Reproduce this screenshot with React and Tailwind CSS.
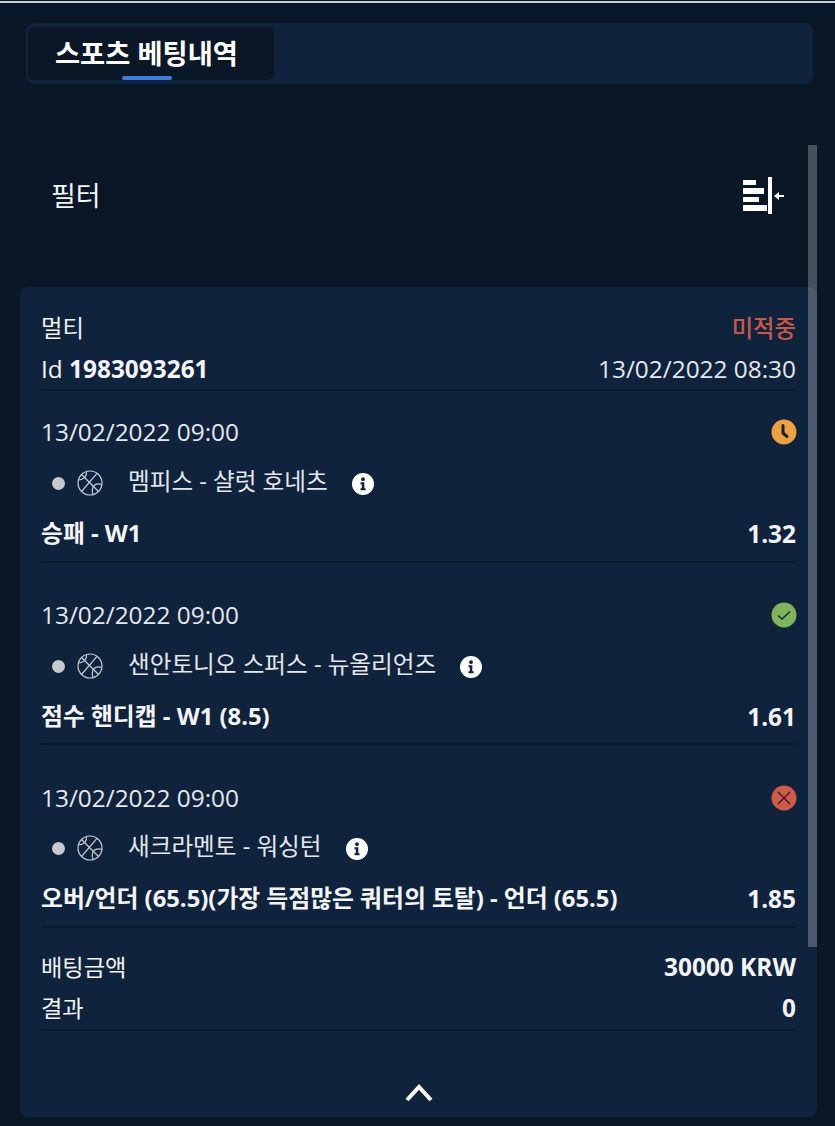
import React from 'react';

const bets = [
    { event: '멤피스 - 샬럿 호네츠', market: '승패 - W1', odds: '1.32', status: 'pending', rowClass: 'h-[172px]', dateClass: 'pt-[24px]' },
    { event: '샌안토니오 스퍼스 - 뉴올리언즈', market: '점수 핸디캡 - W1 (8.5)', odds: '1.61', status: 'won', rowClass: 'h-[171px] mt-[11px]', dateClass: 'pt-[24px]' },
    { event: '새크라멘토 - 워싱턴', market: '오버/언더 (65.5)(가장 득점많은 쿼터의 토탈) - 언더 (65.5)', odds: '1.85', status: 'lost', rowClass: 'h-[172px] mt-[11px]', dateClass: 'pt-[26px]' },
];

const StatusIcon = ({ status }) => {
    if (status === 'pending') {
        return (
            <svg width="26" height="26" viewBox="0 0 26 26" className="-mr-[1px]">
                <circle cx="13" cy="13" r="12.500" fill="#f0a03c" />
                <path d="M12 6.500v7.500l4 3.500" fill="none" stroke="#10233c" strokeWidth="3" strokeLinecap="round" strokeLinejoin="round" />
            </svg>
        );
    }
    if (status === 'won') {
        return (
            <svg width="26" height="26" viewBox="0 0 26 26" className="-mr-[1px]">
                <circle cx="13" cy="13" r="12.500" fill="#7fb45a" />
                <path d="M7 13.500l4 3.500 8-7.500" fill="none" stroke="#14283a" strokeWidth="1.500" />
            </svg>
        );
    }
    return (
        <svg width="26" height="26" viewBox="0 0 26 26" className="-mr-[1px]">
            <circle cx="13" cy="13" r="12.500" fill="#cf5a47" />
            <path d="M7 7l12 12M19 7L7 19" fill="none" stroke="#3a1f2c" strokeWidth="1.500" />
        </svg>
    );
};

const BallIcon = () => (
    <svg width="26" height="26" viewBox="0 0 26 26" fill="none" stroke="#c3ccd6" strokeWidth="1.200">
        <circle cx="13" cy="13" r="12" />
        <path d="M4.500 4.500l17 17" />
        <path d="M9.500 1.500c.5 4-2 8-8.300 8.500" />
        <path d="M20 3.300L4.500 21.500" />
        <path d="M16.500 16c2-2 5-2.500 8.300-1.500" />
        <path d="M16.500 16c-1.500 2.500-1.500 5.500-.5 8.500" />
    </svg>
);

const InfoIcon = () => (
    <svg width="22" height="22" viewBox="0 0 22 22">
        <circle cx="11" cy="11" r="11" fill="#ffffff" />
        <circle cx="11" cy="6.200" r="1.900" fill="#10233c" />
        <path d="M8.500 9.300h3.800v6h1.300v1.900H8.500v-1.900h1.300v-4.100H8.500z" fill="#10233c" />
    </svg>
);

const FilterIcon = () => (
    <svg width="42" height="38" viewBox="0 0 42 38" fill="#ffffff">
        <rect x="0" y="3" width="13" height="5" />
        <rect x="0" y="11" width="21" height="6" />
        <rect x="0" y="20" width="16" height="5" />
        <rect x="0" y="28" width="24" height="6" />
        <rect x="25" y="0" width="4" height="37" />
        <path d="M31 19l5-4v3h5v2h-5v3z" />
    </svg>
);

const BetRow = ({ bet }) => (
    <div className={`border-b-2 border-[#0b1a2e] ${bet.rowClass}`}>
        <div className={`flex items-center justify-between h-[58px] ${bet.dateClass}`}>
            <span className="text-[24.4px] text-[#e4e8ec]">13/02/2022 09:00</span>
            <StatusIcon status={bet.status} />
        </div>
        <div className="flex items-center h-[34px] mt-[17px] pl-[11px]">
            <span className="w-[13px] h-[13px] rounded-full bg-[#c6c9ce] mr-[12px]" />
            <BallIcon />
            <span className="ml-[25px] mb-[3px] text-[23.6px] text-[#e4e8ec]">{bet.event}</span>
            <span className="ml-[24px] mt-[2px] flex"><InfoIcon /></span>
        </div>
        <div className="flex items-center justify-between h-[34px] mt-[17px]">
            <span className="text-[23.8px] font-bold text-[#f2f4f6]">{bet.market}</span>
            <span className="text-[24.4px] font-bold text-[#f2f4f6]">{bet.odds}</span>
        </div>
    </div>
);

export default function App() {
    return (
        <div
            className="relative w-[835px] h-[1126px] overflow-hidden bg-[#0a1726] pt-[3px]"
            style={{ fontFamily: '"Open Sans", "Noto Sans CJK KR", sans-serif' }}
        >
            {/* Top hairline */}
            <div className="absolute top-[1px] left-0 right-0 h-[2px] bg-[#c9ced6]" />

            {/* Tabs */}
            <div className="mx-[26px] mt-[20px] h-[61px] w-[787px] rounded-[8px] bg-[#10233c] pl-[2px] pt-[4px]">
                <div className="relative w-[246px] h-[53px] rounded-[6px] bg-[#0a1726] flex items-center pl-[27px]">
                    <span className="text-[27.3px] font-semibold text-white mt-[2px]">스포츠 베팅내역</span>
                    <span className="absolute left-[94px] bottom-0 w-[50px] h-[4px] rounded-[2px] bg-[#3b7ddd]" />
                </div>
            </div>

            {/* Filter */}
            <div className="flex items-center justify-between h-[203px] pl-[51px] pr-[50px] pt-[21px]">
                <span className="text-[27px] text-[#f2f4f6]">필터</span>
                <FilterIcon />
            </div>

            {/* Bet card */}
            <div className="mx-[20px] w-[797px] h-[830px] rounded-[8px] bg-[#10233c] px-[21px] pt-[21px]">
                <div className="border-b-2 border-[#0b1a2e] h-[83px]">
                    <div className="flex items-center justify-between h-[41px]">
                        <span className="text-[23.3px] text-[#f2f4f6]">멀티</span>
                        <span className="text-[23.3px] font-medium text-[#c8584a]">미적중</span>
                    </div>
                    <div className="flex items-center justify-between h-[40px]">
                        <span className="text-[24.4px] text-[#f2f4f6]">Id <b>1983093261</b></span>
                        <span className="text-[24.4px] text-[#e4e8ec]">13/02/2022 08:30</span>
                    </div>
                </div>

                {bets.map((bet) => (
                    <BetRow key={bet.event} bet={bet} />
                ))}

                <div className="border-b-2 border-[#0b1a2e] h-[103px] pt-[19px]">
                    <div className="flex items-center justify-between h-[41px]">
                        <span className="text-[23.2px] text-[#f2f4f6]">배팅금액</span>
                        <span className="text-[24.4px] font-bold text-[#f2f4f6]">30000 KRW</span>
                    </div>
                    <div className="flex items-center justify-between h-[41px]">
                        <span className="text-[23.2px] text-[#f2f4f6]">결과</span>
                        <span className="text-[24.4px] font-bold text-[#f2f4f6]">0</span>
                    </div>
                </div>

                <div className="flex justify-center mt-[53px]">
                    <svg width="28" height="18" viewBox="0 0 28 18" fill="none" stroke="#ffffff" strokeWidth="4">
                        <path d="M2 16L14 3l12 13" />
                    </svg>
                </div>
            </div>

            {/* Scrollbar thumb over the content */}
            <div className="absolute left-[808px] top-[145px] w-[9px] h-[802px] bg-white/25" />
        </div>
    );
}
